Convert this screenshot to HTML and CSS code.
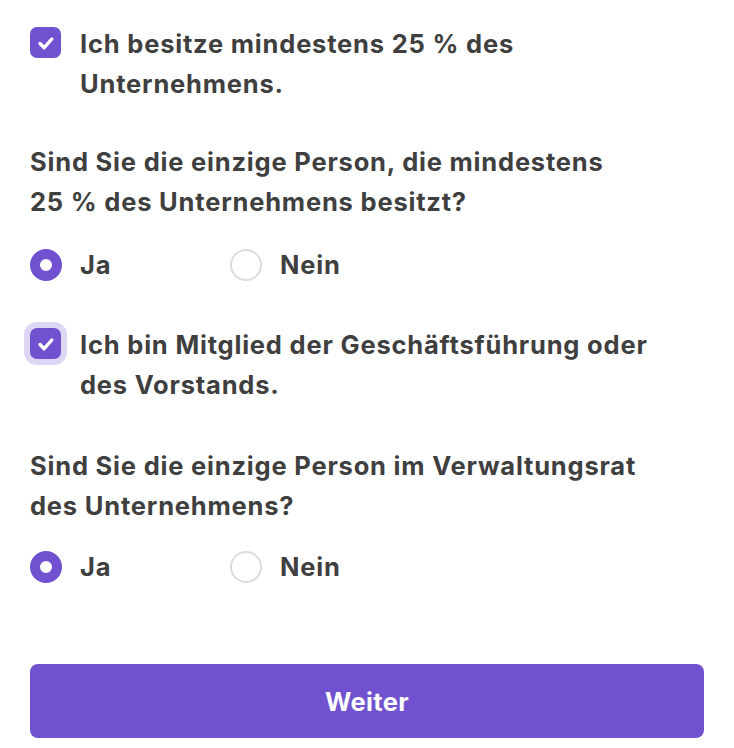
FILE: index.html
```html
<!DOCTYPE html>
<html lang="de">
<head>
<meta charset="utf-8">
<title>Formular</title>
<link rel="stylesheet" href="styles.css">
</head>
<body>
<form class="form">
  <label class="check">
    <span class="box">
      <svg viewBox="0 0 30 30" width="30" height="30"><path d="M9 15.5l4.2 4.2 7.6-8.7" fill="none" stroke="#fff" stroke-width="3.4" stroke-linecap="round" stroke-linejoin="round"/></svg>
    </span>
    <span class="text">Ich besitze mindestens 25&nbsp;% des Unternehmens.</span>
  </label>

  <p class="question q1">Sind Sie die einzige Person, die mindestens 25&nbsp;% des Unternehmens besitzt?</p>
  <div class="radios r1">
    <label class="option"><span class="radio on"></span><span class="text">Ja</span></label>
    <label class="option"><span class="radio"></span><span class="text">Nein</span></label>
  </div>

  <label class="check c2">
    <span class="box focus">
      <svg viewBox="0 0 30 30" width="30" height="30"><path d="M9 15.5l4.2 4.2 7.6-8.7" fill="none" stroke="#fff" stroke-width="3.4" stroke-linecap="round" stroke-linejoin="round"/></svg>
    </span>
    <span class="text">Ich bin Mitglied der Geschäftsführung oder des Vorstands.</span>
  </label>

  <p class="question q2">Sind Sie die einzige Person im Verwaltungsrat des Unternehmens?</p>
  <div class="radios r2">
    <label class="option"><span class="radio on"></span><span class="text">Ja</span></label>
    <label class="option"><span class="radio"></span><span class="text">Nein</span></label>
  </div>

  <button type="button" class="submit">Weiter</button>
</form>
</body>
</html>
```

FILE: styles.css
```css
html, body {
  margin: 0;
  padding: 0;
  background: #ffffff;
}

body {
  font-family: Inter, "Noto Sans", "Liberation Sans", sans-serif;
  color: #3f3f3f;
}

.form {
  display: flex;
  flex-direction: column;
  padding: 24px 30px 0 30px;
}

.text,
.question {
  font-size: 25.5px;
  line-height: 40px;
  font-weight: 700;
  letter-spacing: 0.8px;
}

.check {
  display: flex;
  align-items: flex-start;
  gap: 19px;
}

.check .text {
  max-width: 610px;
}

.box {
  flex: none;
  width: 31px;
  height: 31px;
  margin-top: 3px;
  border-radius: 7px;
  background: #7052d0;
  display: flex;
  align-items: center;
  justify-content: center;
}

.box svg {
  display: block;
}

.box.focus {
  box-shadow: 0 0 0 6px #ddd6f5;
}

.question {
  margin: 0;
  max-width: 640px;
}

.q1 { margin-top: 38px; }
.q2 { margin-top: 41px; }

.radios {
  display: flex;
}

.r1 { margin-top: 23px; }
.r2 { margin-top: 21px; }

.c2 { margin-top: 40px; }

.option {
  display: flex;
  align-items: center;
  gap: 18px;
  width: 200px;
}

.radio {
  flex: none;
  width: 32px;
  height: 32px;
  box-sizing: border-box;
  border-radius: 50%;
  border: 2px solid #dcdcdc;
  background: #fff;
}

.radio.on {
  border: 10px solid #7052d0;
}

.submit {
  margin-top: 77px;
  height: 74px;
  width: 100%;
  border: none;
  border-radius: 8px;
  background: #7052d0;
  color: #ffffff;
  font-family: Inter, "Noto Sans", "Liberation Sans", sans-serif;
  font-size: 25.5px;
  font-weight: 700;
  letter-spacing: 0.3px;
  cursor: pointer;
}
```
